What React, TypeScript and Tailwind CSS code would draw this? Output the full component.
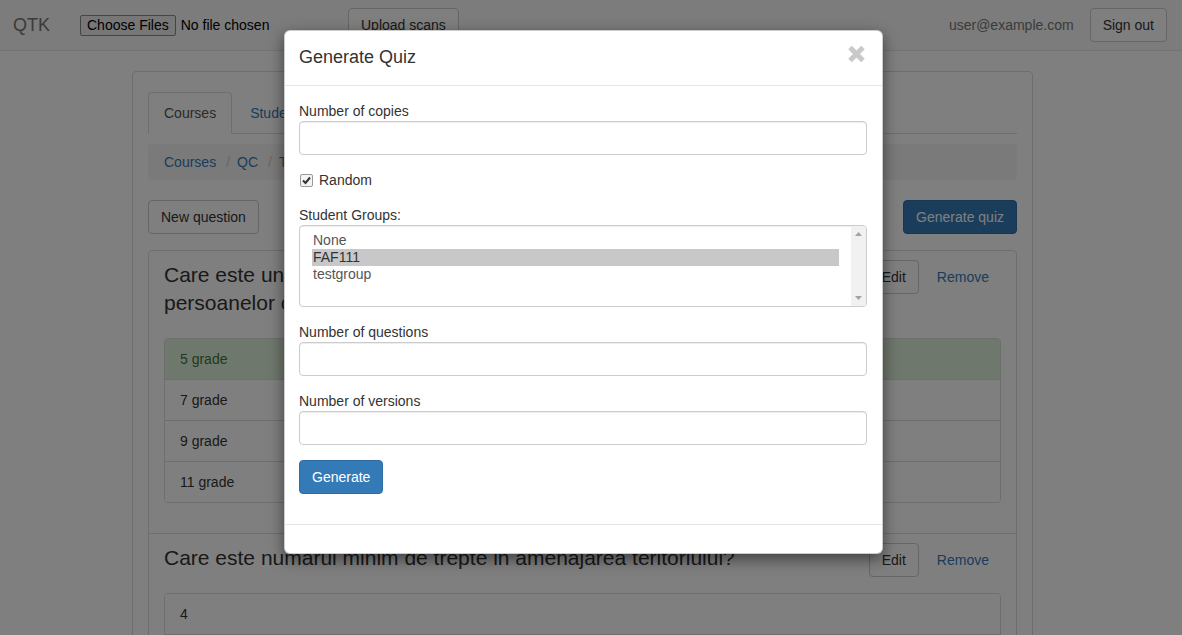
import React from "react";

const btnBase =
  "inline-flex items-center h-[34px] px-[12px] border rounded-[4px] text-[14px] leading-[20px] whitespace-nowrap";
const btnDefault = `${btnBase} border-[#ccc] bg-white text-[#333]`;
const btnPrimary = `${btnBase} border-[#2e6da4] bg-[#337ab7] text-white`;
const inputCls =
  "block w-full h-[34px] border border-[#ccc] rounded-[4px] bg-white shadow-[inset_0_1px_1px_rgba(0,0,0,0.075)]";

function Navbar() {
  return (
    <nav className="flex items-center h-[51px] bg-[#f8f8f8] border-b border-[#e7e7e7]">
      <div className="w-[80px] pl-[13px] text-[18px] leading-[20px] text-[#777]">QTK</div>
      <div className="flex items-center w-[268px]">
        <span className="h-[21px] px-[6px] border border-[#8a8a8a] rounded-[2px] bg-[#efefef] text-[14px] leading-[19px] text-black">
          Choose Files
        </span>
        <span className="ml-[5px] text-[14px] text-black">No file chosen</span>
      </div>
      <button className={btnDefault}>Upload scans</button>
      <div className="ml-auto flex items-center pr-[15px]">
        <span className="text-[14px] text-[#777]">user@example.com</span>
        <button className={`${btnDefault} ml-[16px]`}>Sign out</button>
      </div>
    </nav>
  );
}

function Question({
  title,
  answers,
  correct,
  first,
}: {
  title: React.ReactNode;
  answers: string[];
  correct: number;
  first?: boolean;
}) {
  return (
    <div className={`px-[15px] pt-[10px] pb-[10px] ${first ? "" : "border-t border-[#ddd]"}`}>
      <div className="flex items-start">
        <div className="flex-1 text-[21px] leading-[28px] mb-[21px]">{title}</div>
        <div className="flex gap-[6px] shrink-0 -mt-[1px]">
          <button className={btnDefault}>Edit</button>
          <button className="h-[34px] px-[12px] text-[14px] text-[#337ab7]">Remove</button>
        </div>
      </div>
      <div className="mb-[20px] border border-[#ddd] rounded-[4px] overflow-hidden">
        {answers.map((a, i) => (
          <div
            key={a}
            className={`px-[15px] py-[10px] leading-[20px] ${i > 0 ? "border-t border-[#ddd]" : ""} ${
              i === correct ? "bg-[#dff0d8] text-[#3c763d]" : "bg-white"
            }`}
          >
            {a}
          </div>
        ))}
      </div>
    </div>
  );
}

function Page() {
  return (
    <div className="pl-[132px] pt-[20px]">
      <div className="w-[901px] border border-[#ddd] rounded-[4px] px-[15px] pt-[20px] pb-[20px]">
        {/* tabs */}
        <ul className="flex border-b border-[#ddd] h-[42px]">
          <li className="px-[15px] py-[10px] border border-[#ddd] border-b-white rounded-t-[4px] bg-white text-[#555] leading-[20px] h-[42px]">
            Courses
          </li>
          <li className="ml-[2px] px-[16px] py-[11px] text-[#337ab7] leading-[20px]">Students</li>
          <li className="ml-[2px] px-[16px] py-[11px] text-[#337ab7] leading-[20px]">Groups</li>
        </ul>

        {/* breadcrumb */}
        <div className="mt-[10px] flex items-center bg-[#f5f5f5] rounded-[4px] pl-[16px] pr-[15px] py-[8px] leading-[20px]">
          <span className="text-[#337ab7]">Courses</span>
          <span className="ml-[10px] mr-[7px] text-[#ccc]">/</span>
          <span className="text-[#337ab7]">QC</span>
          <span className="ml-[10px] mr-[7px] text-[#ccc]">/</span>
          <span className="text-[#777]">Test</span>
        </div>

        <div className="mt-[20px] flex justify-between">
          <button className={btnDefault}>New question</button>
          <button className={btnPrimary}>Generate quiz</button>
        </div>

        <div className="mt-[16px] border border-[#ddd] rounded-[4px]">
          <Question
            first
            title={
              <>
                Care este unitatea de măsură a gradului de handicap al
                <br />
                persoanelor cu dizabilități?
              </>
            }
            answers={["5 grade", "7 grade", "9 grade", "11 grade"]}
            correct={0}
          />
          <Question
            title="Care este numarul minim de trepte in amenajarea teritoriului?"
            answers={["4", "3", "5", "2"]}
            correct={-1}
          />
        </div>
      </div>
    </div>
  );
}

function Modal() {
  return (
    <div className="absolute top-[30px] left-[284px] w-[599px] bg-white border border-black/20 rounded-[6px] shadow-[0_5px_15px_rgba(0,0,0,0.5)]">
      <div className="flex items-start justify-between pl-[14px] pr-[15px] pt-[13px] pb-[15px] border-b border-[#e5e5e5]">
        <h4 className="text-[18px] leading-[26px] text-[#333]">Generate Quiz</h4>
        <svg width="19" height="18" viewBox="0 0 19 18" className="mt-[1px] mr-[1px]">
          <path d="M3 2.5 L16 15.5 M16 2.5 L3 15.5" stroke="#c9c9c9" strokeWidth="5" />
        </svg>
      </div>

      <div className="pl-[14px] pr-[15px] pt-[15px] pb-[15px]">
        <div className="mb-[15px]">
          <label className="block leading-[20px]">Number of copies</label>
          <div className={inputCls} />
        </div>

        <div className="mb-[15px] flex items-start h-[20px]">
          <span className="mt-[4px] ml-[1px] flex items-center justify-center w-[13px] h-[13px] border border-[#999] rounded-[2px] bg-[#f3f3f3]">
            <svg width="11" height="11" viewBox="0 0 11 11">
              <path d="M2 5.5 L4.5 8 L9 2.5" fill="none" stroke="#333" strokeWidth="2" />
            </svg>
          </span>
          <span className="ml-[6px] leading-[20px]">Random</span>
        </div>

        <div className="mb-[15px]">
          <label className="block leading-[20px]">Student Groups:</label>
          <div className="flex h-[82px] border border-[#ccc] rounded-[4px] bg-white shadow-[inset_0_1px_1px_rgba(0,0,0,0.075)]">
            <div className="flex-1 pl-[12px] pr-[12px] pt-[6px] text-[#555] leading-[17px]">
              <div className="pl-[1px]">None</div>
              <div className="pl-[1px] bg-[#c8c8c8] text-[#333]">FAF111</div>
              <div className="pl-[1px]">testgroup</div>
            </div>
            <div className="w-[15px] bg-[#f1f1f1] flex flex-col justify-between items-center py-[6px] rounded-r-[3px]">
              <svg width="7" height="4" viewBox="0 0 7 4">
                <path d="M0 4 L3.5 0 L7 4 Z" fill="#a3a3a3" />
              </svg>
              <svg width="7" height="4" viewBox="0 0 7 4">
                <path d="M0 0 L3.5 4 L7 0 Z" fill="#a3a3a3" />
              </svg>
            </div>
          </div>
        </div>

        <div className="mb-[15px]">
          <label className="block leading-[20px]">Number of questions</label>
          <div className={inputCls} />
        </div>

        <div className="mb-[15px]">
          <label className="block leading-[20px]">Number of versions</label>
          <div className={inputCls} />
        </div>

        <div className="mb-[15px]">
          <button className={btnPrimary}>Generate</button>
        </div>
      </div>

      <div className="h-[29px] border-t border-[#e5e5e5]" />
    </div>
  );
}

export default function App() {
  return (
    <div className="relative h-[635px] overflow-hidden bg-white font-['Liberation_Sans',Arial,sans-serif] text-[14px] leading-[20px] text-[#333]">
      <Navbar />
      <Page />
      <div className="absolute inset-0 bg-black/50" />
      <Modal />
    </div>
  );
}
